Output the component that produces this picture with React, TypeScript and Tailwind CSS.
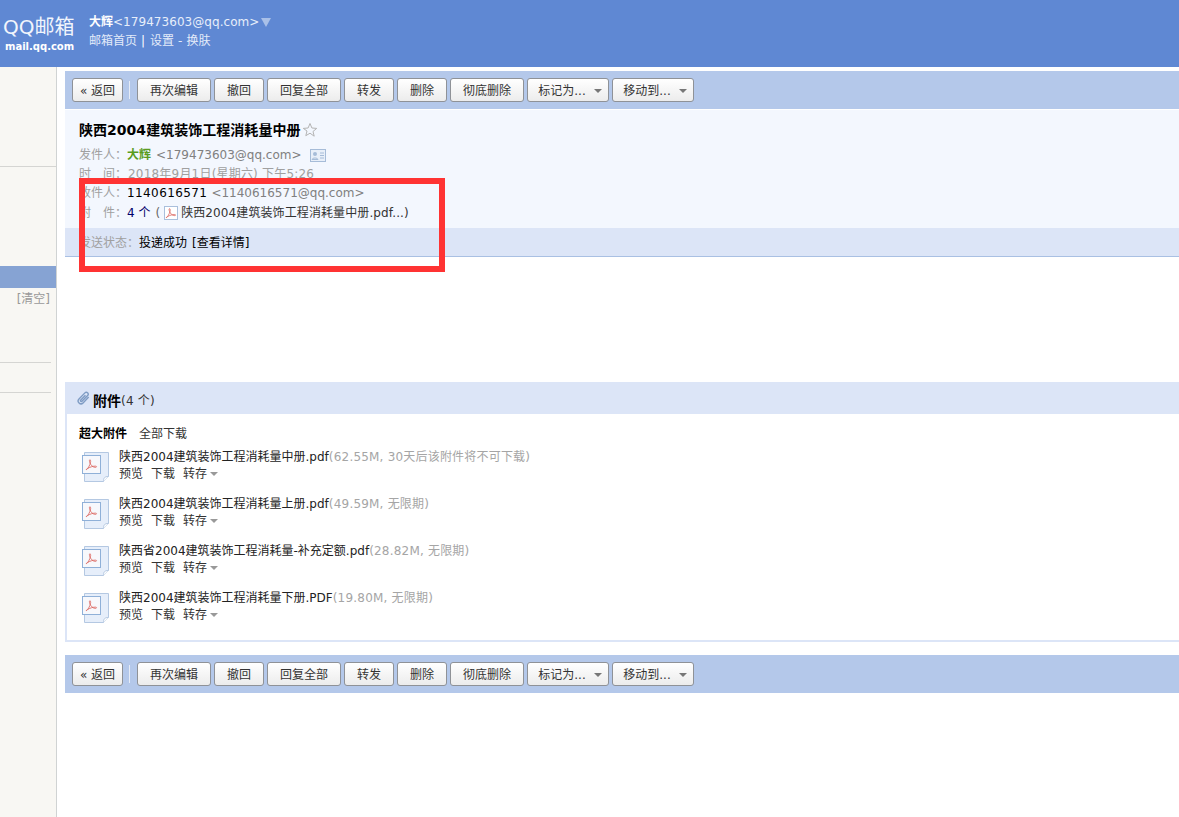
const font = '[font-family:"DejaVu_Sans","Noto_Sans_CJK_SC",sans-serif]'

function PdfGlyph({ className }: { className: string }) {
  return (
    <svg viewBox="0 0 16 16" className={className} fill="none">
      <path
        d="M1.500 14.500c2-1 4.500-5.500 5.300-9 .4-1.700 0-3.500-.9-3.300-.9.200-.5 3.300 1.300 5.900 1.500 2.200 3.900 3.700 6 3.400 1.400-.2 1.200-1.500-.3-1.500-3 0-6.500 1-9.300 2.700-1.200.7-2.400 1.500-2.100 1.800z"
        stroke="#dc6a64"
        strokeWidth="1.100"
      />
    </svg>
  )
}

function PdfFileIcon() {
  return (
    <div className="relative mt-[2px] h-[34px] w-[30px] shrink-0">
      <svg viewBox="0 0 30 34" className="h-[34px] w-[30px]" fill="none">
        <path d="M4.500 2.500h24v24l-5 5h-19z" fill="#e6eefa" stroke="#b4c8e2" />
        <path d="M23.500 31.500c0-3 .5-5 5-5" fill="#fff" stroke="#b4c8e2" />
        <rect x="2.500" y="5.500" width="18" height="18" fill="#f7f8fc" stroke="#8fb0d8" />
      </svg>
      <PdfGlyph className="absolute left-[5px] top-[8px] h-[13px] w-[13px]" />
    </div>
  )
}

function ToolButton({ label, menu, w }: { label: string; menu?: boolean; w: string }) {
  return (
    <button
      className={`flex h-6 items-center justify-center rounded-[3px] border border-[#8f9297] bg-gradient-to-b from-white to-[#ececec] pt-px text-xs text-[#333] ${w} ${menu ? "gap-[8px] pl-[4px]" : ""}`}
    >
      <span>{label}</span>
      {menu && <span className="h-0 w-0 border-x-[4px] border-t-[4px] border-x-transparent border-t-[#777]" />}
    </button>
  )
}

function Toolbar() {
  return (
    <div className="flex h-[38px] items-center bg-[#b4c8ea] pl-[7px]">
      <ToolButton label="« 返回" w="w-[51px]" />
      <div className="ml-[6px] mr-[7px] h-[18px] w-px bg-[#e6ecf7]" />
      <div className="flex gap-[3px]">
        <ToolButton label="再次编辑" w="w-[74px]" />
        <ToolButton label="撤回" w="w-[50px]" />
        <ToolButton label="回复全部" w="w-[74px]" />
        <ToolButton label="转发" w="w-[50px]" />
        <ToolButton label="删除" w="w-[50px]" />
        <ToolButton label="彻底删除" w="w-[74px]" />
        <ToolButton label="标记为..." menu w="w-[82px]" />
        <ToolButton label="移动到..." menu w="w-[82px]" />
      </div>
    </div>
  )
}

const files = [
  { name: "陕西2004建筑装饰工程消耗量中册.pdf", meta: "(62.55M, 30天后该附件将不可下载)" },
  { name: "陕西2004建筑装饰工程消耗量上册.pdf", meta: "(49.59M, 无限期)" },
  { name: "陕西省2004建筑装饰工程消耗量-补充定额.pdf", meta: "(28.82M, 无限期)" },
  { name: "陕西2004建筑装饰工程消耗量下册.PDF", meta: "(19.80M, 无限期)" },
]

export default function App() {
  return (
    <div className={`relative flex h-[817px] flex-col overflow-hidden bg-white text-xs text-black ${font}`}>
      <header className="flex h-[67px] shrink-0 bg-[#5f88d3] text-white">
        <div className="flex w-[89px] flex-col pl-[3px] pt-[14px]">
          <div className="text-[20px] leading-[26px] text-[#f1f5fc]">QQ邮箱</div>
          <div className="pl-[2px] text-[10px] leading-[14px] font-bold">mail.qq.com</div>
        </div>
        <div className="pt-[13px]">
          <div className="flex h-[18px] items-center">
            <b>大辉</b>
            <span className="tracking-[0.05px] text-[#e7eefa]">&lt;179473603@qq.com&gt;</span>
            <span className="ml-[2px] h-0 w-0 border-x-[5px] border-t-[9px] border-x-transparent border-t-[#a9c0e8]" />
          </div>
          <div className="mt-[1px] flex h-[18px] items-center text-[#e3ebf9]">
            邮箱首页<span className="ml-[4px] mr-[5px] text-white">|</span>设置<span className="mx-[4px]">-</span>换肤
          </div>
        </div>
      </header>

      <div className="flex flex-1">
        <aside className="w-[57px] shrink-0 border-r border-[#d0d3d3] bg-[#f8f7f3] text-[#999]">
          <div className="h-[100px] border-b border-[#d5d5d2]" />
          <div className="mt-[99px] h-[22px] bg-[#86a3d3]" />
          <div className="mt-[2px] h-[18px] pr-[6px] text-right leading-[18px]">[清空]</div>
          <div className="mt-[54px] mr-[5px] h-px bg-[#d5d5d2]" />
          <div className="mt-[29px] mr-[5px] h-px bg-[#d5d5d2]" />
        </aside>

        <main className="min-w-0 flex-1 pl-[8px] pt-[4px]">
          <Toolbar />

          <section className="mt-px h-[147px] border-b border-[#a9c0e3] bg-[#f3f7fe]">
            <div className="h-[118px] pl-[14px] pt-[10px] leading-[19px]">
              <h1 className="flex h-[20px] items-center text-sm font-bold tracking-[0.03px]">
                陕西2004建筑装饰工程消耗量中册
                <svg viewBox="0 0 16 16" className="ml-[2px] h-4 w-4" fill="none" stroke="#b4b4b4">
                  <path d="M8 1.500l1.900 4.500 4.800.4-3.700 3.100 1.200 4.700L8 11.200l-4.200 2.500L5 9 1.300 6.400l4.800-.4z" />
                </svg>
              </h1>
              <div className="mt-[6px] flex h-[19px] items-center text-[#a0a0a0]">
                发件人：<b className="text-[#5a9c1e]">大辉</b>
                <span className="ml-[5px] text-[#808080]">&lt;179473603@qq.com&gt;</span>
                <svg viewBox="0 0 16 13" className="ml-[8px] h-[13px] w-[16px]" fill="none">
                  <rect x=".5" y=".5" width="15" height="12" fill="#e8eff9" stroke="#a6bcd8" />
                  <circle cx="5" cy="5" r="2" fill="#a6bcd8" />
                  <path d="M2 10.500c.5-2 5.500-2 6 0zM10 4h4M10 6.500h4M10 9h4" stroke="#a6bcd8" />
                </svg>
              </div>
              <div className="h-[19px] text-[#a0a0a0]">
                时<span className="ml-[12px]">间：</span>
                <span className="ml-[1px] tracking-[0.2px]">2018年9月1日(星期六) 下午5:26</span>
              </div>
              <div className="h-[19px] text-[#a0a0a0]">
                收件人：<span className="tracking-[0.4px] text-black">1140616571</span>
                <span className="ml-[4px] text-[#808080]">&lt;1140616571@qq.com&gt;</span>
              </div>
              <div className="flex h-[20px] items-center text-[#a0a0a0]">
                附<span className="ml-[12px]">件：</span>
                <span className="text-[#00006a]">4 个</span>
                <span className="ml-[5px] text-[#666]">(</span>
                <span className="ml-[4px] mr-[3px] flex h-[14px] w-[14px] items-center justify-center border border-[#a9bfdc] bg-white">
                  <PdfGlyph className="h-[12px] w-[12px]" />
                </span>
                <span className="tracking-[0.1px] text-[#333]">陕西2004建筑装饰工程消耗量中册.pdf...)</span>
              </div>
            </div>
            <div className="flex h-[28px] items-center bg-[#dce5f7] pl-[14px] pt-[2px]">
              <span className="text-[#a0a0a0]">发送状态：</span>
              <span>投递成功</span>
              <span className="ml-[5px]">[查看详情]</span>
            </div>
          </section>

          <section className="mt-[125px] h-[260px] border-b-2 border-l-2 border-[#dce5f7]">
            <div className="-ml-[2px] flex h-8 items-center bg-[#dce5f7] pl-[11px] pt-[5px]">
              <svg viewBox="0 0 16 16" className="-mt-[5px] h-[15px] w-[15px]" fill="none" stroke="#7f9cc4" strokeWidth="1.500">
                <path d="M13.500 6.500l-6 6.200a3 3 0 0 1-4.300-4.200L9.500 2a2 2 0 0 1 2.900 2.800l-6 6.200a.9.900 0 0 1-1.300-1.300l5-5.200" />
              </svg>
              <b className="ml-[2px] text-sm">附件</b>
              <span className="tracking-[0.2px] text-[#333]">(4 个)</span>
            </div>
            <div className="flex h-[30px] items-end pl-[12px] pb-[2px]">
              <b>超大附件</b>
              <span className="ml-[12px] text-[#333]">全部下载</span>
            </div>
            <div className="flex flex-col gap-[13px] pl-[13px] pt-[4px]">
              {files.map((file) => (
                <div key={file.name} className="flex h-[34px]">
                  <PdfFileIcon />
                  <div className="pl-[9px]">
                    <div className="flex h-[17px] items-center whitespace-nowrap text-[#222]">
                      {file.name}
                      <span className="tracking-[0.2px] text-[#a5a5a5]">{file.meta}</span>
                    </div>
                    <div className="flex h-[17px] items-center gap-[8px] text-[#333]">
                      <span>预览</span>
                      <span>下载</span>
                      <span className="flex items-center gap-[3px]">
                        转存
                        <span className="h-0 w-0 border-x-[4px] border-t-[4px] border-x-transparent border-t-[#999]" />
                      </span>
                    </div>
                  </div>
                </div>
              ))}
            </div>
          </section>

          <div className="mt-[13px]">
            <Toolbar />
          </div>
        </main>
      </div>

      <div className="absolute left-[79px] top-[178px] h-[94px] w-[366px] border-[6px] border-[#ff3333]" />
    </div>
  )
}
